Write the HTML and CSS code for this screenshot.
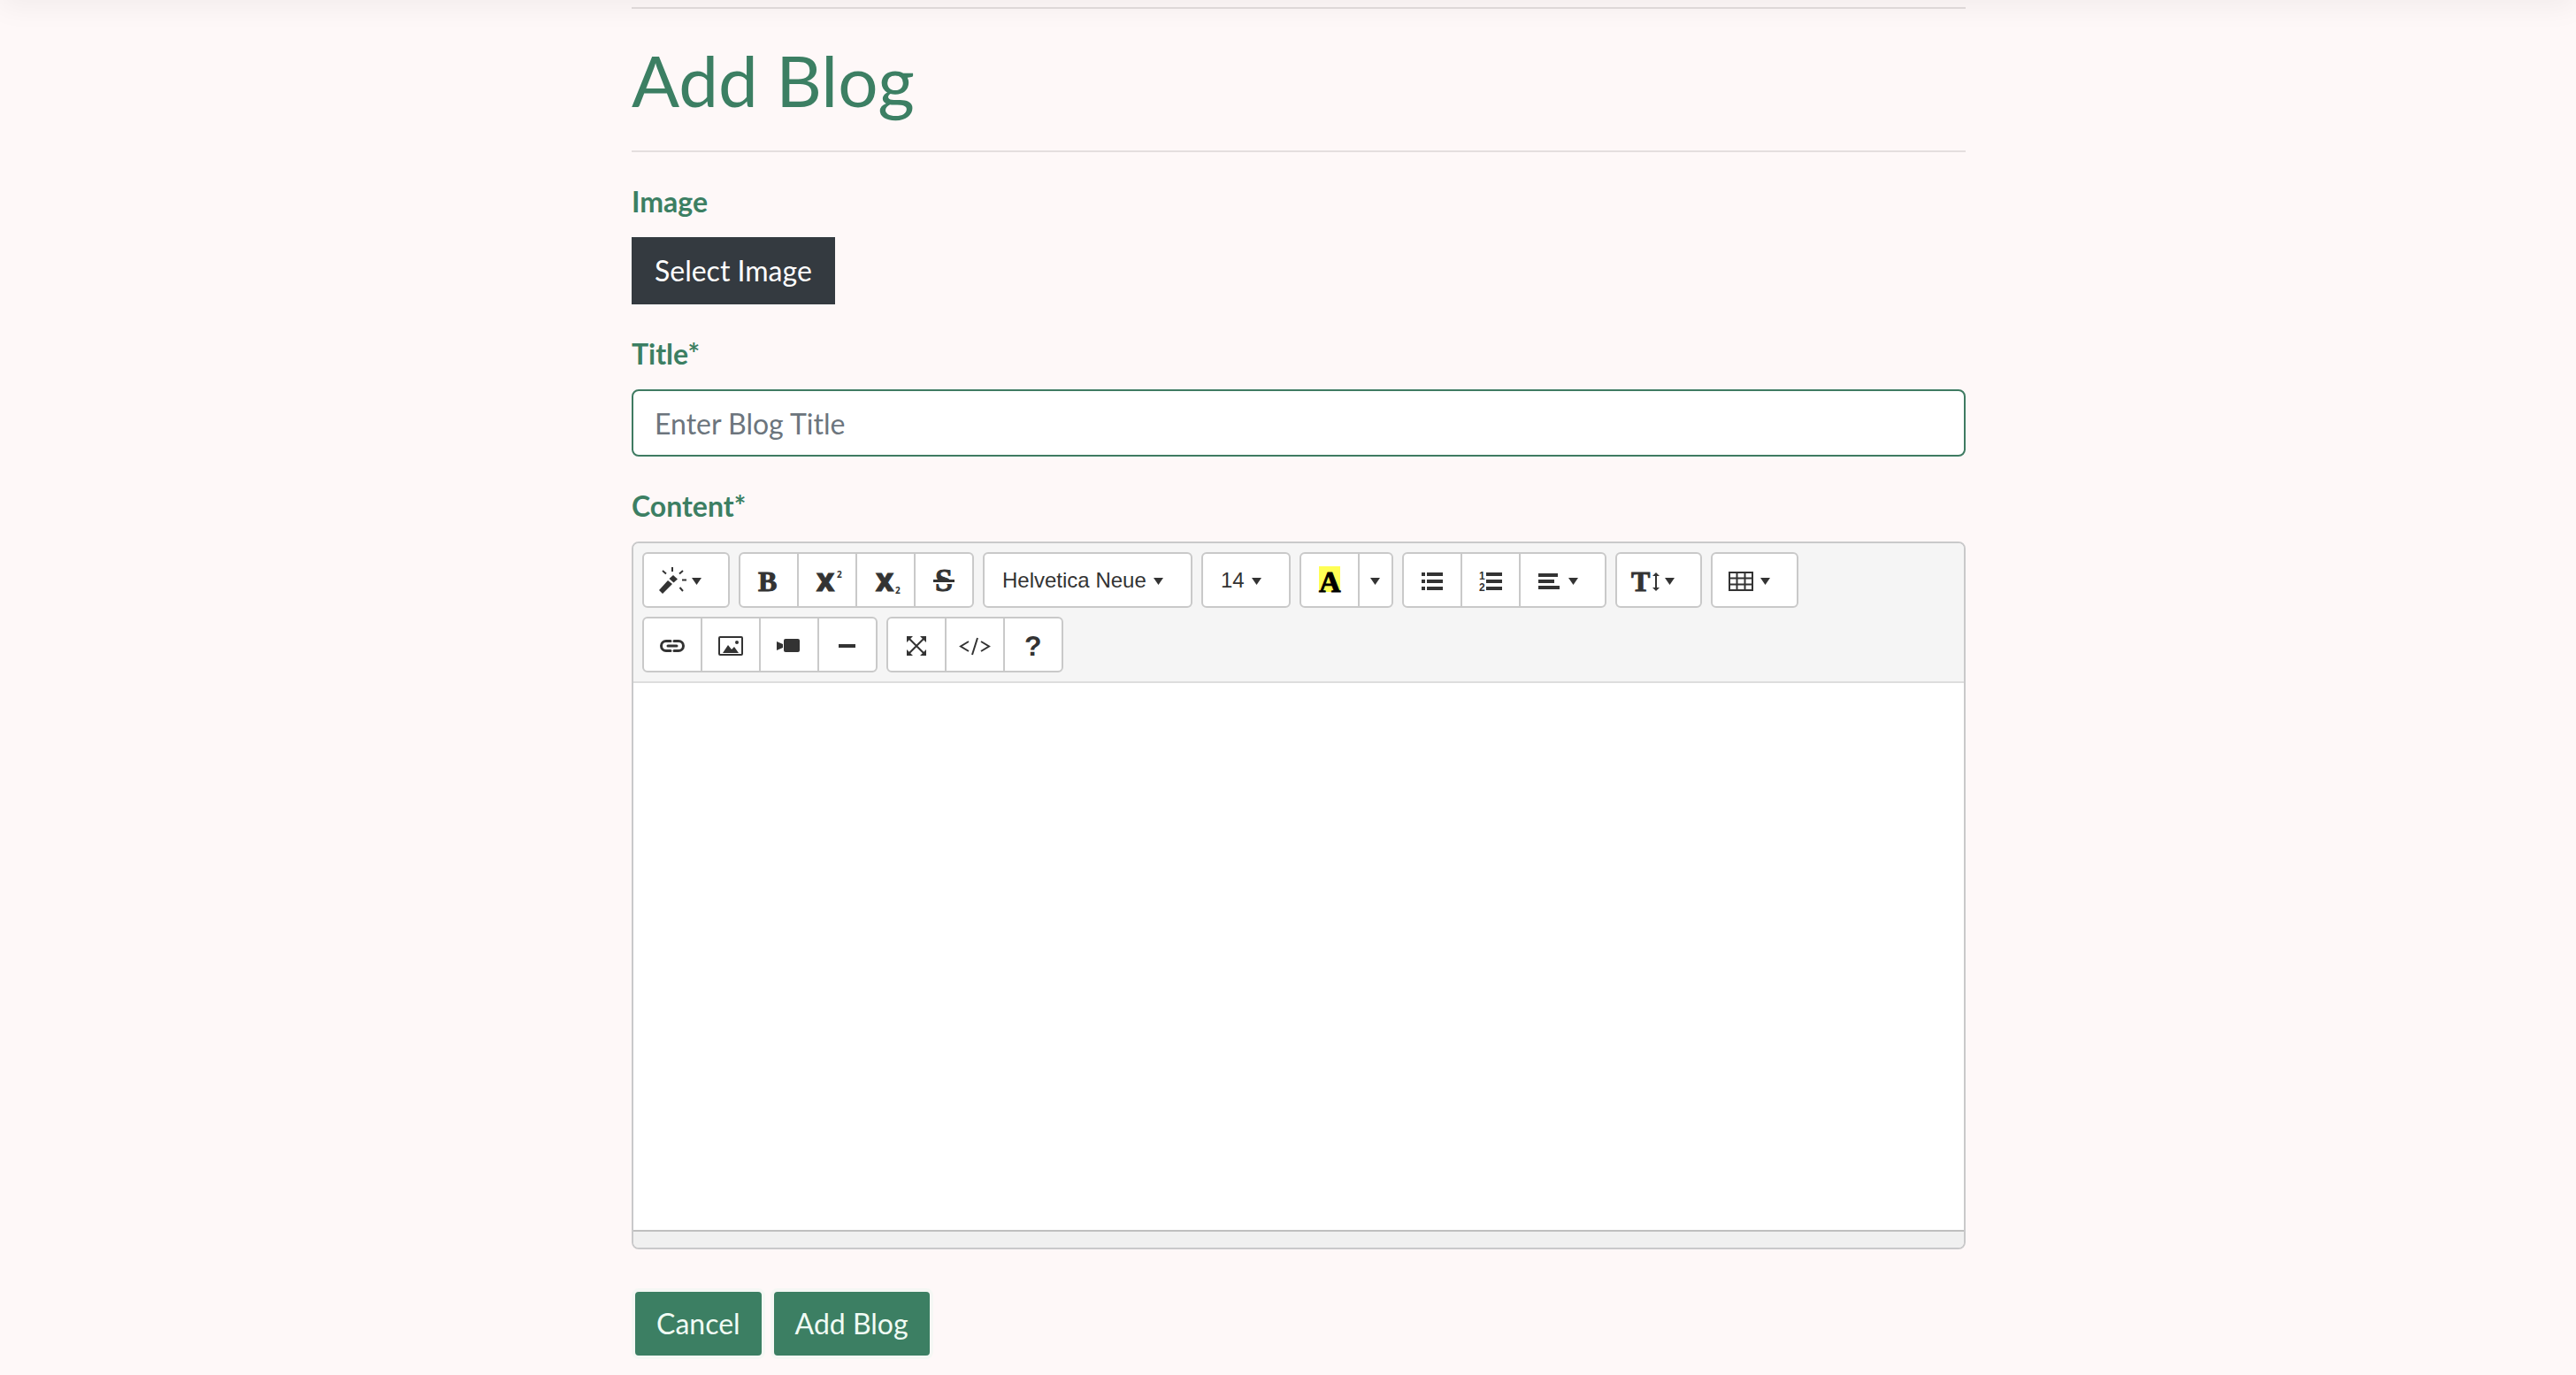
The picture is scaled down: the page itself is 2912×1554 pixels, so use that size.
FILE: index.html
```html
<!DOCTYPE html>
<html lang="en">
<head>
<meta charset="utf-8">
<meta name="viewport" content="width=device-width, initial-scale=1">
<title>Add Blog</title>
<link rel="stylesheet" href="styles.css">
</head>
<body>
<svg class="sprite" aria-hidden="true">
  <symbol id="caret" viewBox="0 0 12 12"><path d="M0 3H11L5.500 11Z"/></symbol>
</svg>
<div class="topbar"></div>
<main class="page">
  <hr class="rule">
  <h1 class="heading">Add Blog</h1>
  <hr class="rule">
  <form class="form">
    <div class="field">
      <label class="label" for="image">Image</label>
      <button class="select" type="button" id="image">Select Image</button>
    </div>
    <div class="field">
      <label class="label" for="title">Title*</label>
      <input class="input" type="text" id="title" placeholder="Enter Blog Title">
    </div>
    <div class="field">
      <label class="label" for="content">Content*</label>
      <div class="editor">
        <div class="toolbar">
          <div class="group">
            <button class="tool menu" type="button" aria-label="Style"><svg class="icon" viewBox="0 0 32 32"><path d="M1 27L11 16L16 20L5 31ZM12.500 14L17 10L22 14.500L17.500 18.500Z"/><path class="line" d="M16 1V6M5 5L9 8.500M28 5L24 8.500M27 15.500H32M24.500 24L28 28"/></svg><svg class="caret"><use href="#caret"/></svg></button>
          </div>
          <div class="group">
            <button class="tool" type="button" aria-label="Bold"><svg class="icon" viewBox="0 0 32 32"><text class="serif heavy" x="4" y="28">B</text></svg></button>
            <button class="tool" type="button" aria-label="Superscript"><svg class="icon" viewBox="0 0 32 32"><text class="cross" x="4" y="28">X</text><text class="tiny" x="27" y="13">2</text></svg></button>
            <button class="tool" type="button" aria-label="Subscript"><svg class="icon" viewBox="0 0 32 32"><text class="cross" x="5" y="28">X</text><text class="tiny" x="27" y="31">2</text></svg></button>
            <button class="tool" type="button" aria-label="Strikethrough"><svg class="icon" viewBox="0 0 32 32"><text class="serif wide heavy" x="6" y="28">S</text><path class="gap" d="M4 18H28V20H4Z"/><path d="M4 15H28V18H4Z"/></svg></button>
          </div>
          <div class="group"><button class="tool named font" type="button">Helvetica Neue<svg class="caret"><use href="#caret"/></svg></button></div>
          <div class="group"><button class="tool named size" type="button">14<svg class="caret"><use href="#caret"/></svg></button></div>
          <div class="group">
            <button class="tool" type="button" aria-label="Text color"><svg class="icon" viewBox="0 0 32 32"><path class="mark" d="M4 0H28V29H4Z"/><text class="serif ink" x="4" y="29">A</text></svg></button>
            <button class="tool narrow" type="button" aria-label="More colors"><svg class="caret"><use href="#caret"/></svg></button>
          </div>
          <div class="group">
            <button class="tool" type="button" aria-label="Bulleted list"><svg class="icon" viewBox="0 0 32 32"><path d="M4 7h4v4H4zM10 7h18v4H10zM4 15h4v4H4zM10 15h18v4H10zM4 23h4v4H4zM10 23h18v4H10z"/></svg></button>
            <button class="tool" type="button" aria-label="Numbered list"><svg class="icon" viewBox="0 0 32 32"><path d="M11 7h18v4H11zM11 15h18v4H11zM11 23h18v4H11z"/><text class="digit" x="3" y="15">1</text><text class="digit" x="3" y="28">2</text></svg></button>
            <button class="tool menu" type="button" aria-label="Paragraph"><svg class="icon" viewBox="0 0 32 32"><path d="M4 8h22v4H4zM4 15h18v4H4zM4 22h24v4H4z"/></svg><svg class="caret"><use href="#caret"/></svg></button>
          </div>
          <div class="group">
            <button class="tool menu slim" type="button" aria-label="Line height"><svg class="icon" viewBox="0 0 32 32"><text class="serif heavy" x="0" y="28">T</text><path d="M28 7L32 11H29V24H32L28 28L24 24H27V11H24Z"/></svg><svg class="caret"><use href="#caret"/></svg></button>
          </div>
          <div class="group">
            <button class="tool menu" type="button" aria-label="Table"><svg class="icon" viewBox="0 0 32 32"><path class="thin" d="M3 7H29V27H3ZM3 13.500H29M3 20.500H29M11.500 7V27M20.500 7V27"/></svg><svg class="caret"><use href="#caret"/></svg></button>
          </div>
          <div class="group">
            <button class="tool" type="button" aria-label="Link"><svg class="icon" viewBox="0 0 32 32"><path class="chain" d="M14 11.500H9A5.500 5.500 0 0 0 9 22.500H14M18 11.500H23A5.500 5.500 0 0 1 23 22.500H18M11 17H21"/></svg></button>
            <button class="tool" type="button" aria-label="Picture"><svg class="icon" viewBox="0 0 32 32"><rect class="thin" x="3" y="7" width="26" height="20" rx="1"/><path d="M7 25L13 16L17 21L20 18L25 25Z"/><circle cx="23" cy="13" r="2"/></svg></button>
            <button class="tool" type="button" aria-label="Video"><svg class="icon" viewBox="0 0 32 32"><path d="M2 12L9 15V19L2 22Z"/><rect x="10" y="9" width="18" height="15" rx="2"/></svg></button>
            <button class="tool" type="button" aria-label="Horizontal rule"><svg class="icon" viewBox="0 0 32 32"><path d="M6 15H25V19H6Z"/></svg></button>
          </div>
          <div class="group">
            <button class="tool" type="button" aria-label="Full screen"><svg class="icon" viewBox="0 0 32 32"><path class="thin" d="M7 8L25 26M25 8L7 26"/><path d="M5 6H12L5 13ZM27 6V13L20 6ZM5 28V21L12 28ZM27 28H20L27 21Z"/></svg></button>
            <button class="tool" type="button" aria-label="Code view"><svg class="icon" viewBox="0 0 32 32"><path class="code" d="M9 12L0 17.500L9 23M23 12L32 17.500L23 23M19 8L13 27"/></svg></button>
            <button class="tool" type="button" aria-label="Help"><svg class="icon" viewBox="0 0 32 32"><text class="help" x="6" y="28">?</text></svg></button>
          </div>
        </div>
        <textarea class="content" id="content"></textarea>
        <div class="status"></div>
      </div>
    </div>
    <div class="actions">
      <button class="action" type="button">Cancel</button>
      <button class="action" type="submit">Add Blog</button>
    </div>
  </form>
</main>
</body>
</html>
```
FILE: styles.css
```css
* { box-sizing: border-box; }
body {
  margin: 0;
  padding: 8px 0 18px 24px;
  background: #fef8f8;
  color: #3c7f63;
  font: 32px/48px Lato, sans-serif;
}
button, input, textarea { margin: 0; font: inherit; }
.sprite { position: absolute; width: 0; height: 0; }
.topbar {
  position: fixed;
  top: -40px;
  left: 0;
  right: 0;
  height: 40px;
  box-shadow: 0 8px 32px rgba(0, 0, 0, .05);
}
.page { max-width: 1508px; margin: 0 auto; }
.rule { height: 2px; margin: 0; border: 0; background: rgba(0, 0, 0, .1); }
.heading { margin: 32px 0; font-size: 80px; line-height: 96px; font-weight: 400; }
.form { display: flex; flex-direction: column; gap: 32px; padding-top: 32px; }
.field { display: flex; flex-direction: column; gap: 16px; }
.label { font-weight: 700; }
.select {
  align-self: flex-start;
  padding: 12px 24px;
  border: 2px solid #343a40;
  background: #343a40;
  color: #fff;
}
.input {
  width: 100%;
  height: 76px;
  padding: 12px 24px;
  border: 2px solid #3f7b62;
  border-radius: 8px;
  background: #fff;
  color: #495057;
}
.input::placeholder { color: #6c757d; opacity: 1; }

.editor {
  display: flex;
  flex-direction: column;
  overflow: hidden;
  border: 2px solid #c9c9ca;
  border-radius: 8px;
}
.toolbar {
  display: flex;
  flex-wrap: wrap;
  gap: 10px;
  padding: 10px;
  border-bottom: 2px solid #ddd;
  background: #f5f5f5;
}
.group { display: flex; }
.tool {
  display: flex;
  align-items: center;
  justify-content: center;
  width: 68px;
  height: 63px;
  padding: 1px 0 0;
  border: 2px solid #c9c9c9;
  background: #fff;
  color: #333;
}
.tool + .tool { margin-left: -2px; }
.tool:first-child { border-top-left-radius: 6px; border-bottom-left-radius: 6px; }
.tool:last-child { border-top-right-radius: 6px; border-bottom-right-radius: 6px; }
.menu { justify-content: flex-start; gap: 6px; width: 99px; padding-left: 16px; }
.slim { width: 98px; }
.named {
  justify-content: flex-start;
  gap: 8px;
  padding-left: 20px;
  font: 24px/28px "Liberation Sans", Arial, sans-serif;
}
.font { width: 237px; }
.size { width: 101px; }
.narrow { width: 40px; }
.icon { width: 32px; height: 32px; flex: none; overflow: visible; fill: #333; }
.caret { width: 12px; height: 12px; flex: none; fill: #333; }
.line, .thin, .chain, .code { fill: none; stroke: #333; stroke-width: 2; }
.chain { stroke-width: 3; stroke-linecap: round; }
.gap { fill: #fff; }
.mark { fill: #ff5; }
.serif { font: 700 32px "Liberation Serif", serif; }
.heavy { stroke: #333; stroke-width: 1; }
.ink { fill: #000; stroke: #000; stroke-width: 1; font-size: 34px; }
.wide { font-size: 36px; }
.cross { font: 800 28px "Open Sans", sans-serif; stroke: #333; stroke-width: 1; }
.tiny { font: 700 10px "Open Sans", sans-serif; }
.digit { font: 700 12px "Liberation Sans", sans-serif; }
.help { font: 700 32px "Liberation Sans", sans-serif; }
.content {
  display: block;
  width: 100%;
  height: 618px;
  padding: 20px;
  border: 0;
  background: #fff;
  color: #333;
  resize: none;
}
.status { height: 20px; border-top: 2px solid #bfbfbf; background: #f0f0f0; }

.actions { display: flex; gap: 6px; padding-top: 12px; }
.action {
  height: 80px;
  padding: 0 24px;
  border: 4px solid #f5f7f4;
  border-radius: 8px;
  background: #3c7f63;
  color: #f0fbf4;
}
```
